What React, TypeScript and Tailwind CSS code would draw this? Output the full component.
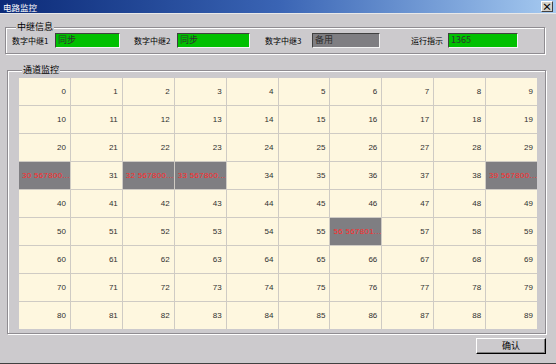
import React from "react";

const BG = "bg-[#cccacd]";

const alarms: Record<number, string> = {
  30: "30 567800...",
  32: "32 567800...",
  33: "33 567800...",
  39: "39 567800...",
  56: "56 567801...",
};

function StatusBox({ text, width, color }: { text: string; width: string; color: string }) {
  return (
    <div
      className={`${width} ${color} h-[15px] border border-t-[#404040] border-l-[#404040] border-b-[#f4f4f4] border-r-[#f4f4f4] pl-[2px] text-[9px] leading-[12px] text-[#303030]`}
    >
      {text}
    </div>
  );
}

function Cell({ n }: { n: number }) {
  const alarm = alarms[n];
  if (alarm) {
    return (
      <div className="bg-[#7f7e82] flex items-center pl-[3px] whitespace-nowrap overflow-hidden text-[8px] tracking-[0.3px] text-[#ff2a2a] font-['Liberation_Sans',sans-serif]">
        {alarm}
      </div>
    );
  }
  return (
    <div className="bg-[#fef7df] flex items-center justify-end pr-[4px] text-[8px] text-[#303030] font-['Liberation_Sans',sans-serif]">
      {n}
    </div>
  );
}

export default function App() {
  const cells = Array.from({ length: 90 }, (_, i) => i);
  return (
    <div
      className={`w-[556px] h-[364px] ${BG} flex flex-col border-b border-[#404040] overflow-hidden font-['Noto_Sans_CJK_SC','Liberation_Sans',sans-serif] text-[9px] text-black`}
    >
      {/* Title bar */}
      <div className="h-[14px] flex items-center justify-between bg-gradient-to-r from-[#0c2a78] via-[#3a64b4] to-[#a6caf0] pl-[3px] pr-[3px] border-b border-[#e8e8e8]">
        <span className="text-white text-[8.5px] leading-[12px]">电路监控</span>
        <div className="w-[12px] h-[11px] bg-[#d4d0c8] border border-t-white border-l-white border-b-[#404040] border-r-[#404040] flex items-center justify-center text-[10px] leading-none font-bold text-black">
          ×
        </div>
      </div>

      {/* 中继信息 */}
      <fieldset className="ml-[5px] mt-[7px] w-[540px] h-[33px] border border-[#8f8c91] shadow-[inset_1px_1px_0_#fff,1px_1px_0_#fff] px-[6px]">
        <legend className={`${BG} ml-[4px] px-[1px] text-[9px] leading-[12px]`}>中继信息</legend>
        <div className="flex items-center leading-[12px] text-[8px]">
          <span className="w-[43px]">数字中继1</span>
          <StatusBox text="同步" width="w-[65px]" color="bg-[#00c000]" />
          <span className="ml-[14px] w-[43px]">数字中继2</span>
          <StatusBox text="同步" width="w-[73px]" color="bg-[#00c000]" />
          <span className="ml-[15px] w-[47px]">数字中继3</span>
          <StatusBox text="备用" width="w-[68px]" color="bg-[#7f7e82]" />
          <span className="ml-[31px] w-[37px]">运行指示</span>
          <StatusBox text="1365" width="w-[70px]" color="bg-[#00c000]" />
        </div>
      </fieldset>

      {/* 通道监控 */}
      <fieldset className="ml-[7px] mt-[10px] w-[539px] h-[270px] border border-[#8f8c91] shadow-[inset_1px_1px_0_#fff,1px_1px_0_#fff] pl-[11px]">
        <legend className={`${BG} ml-[3px] px-[1px] text-[9px] leading-[12px]`}>通道监控</legend>
        <div className="mt-[2px] w-[518px] h-[251px] grid grid-cols-10 grid-rows-9 gap-px bg-[#cfcbc4]">
          {cells.map((n) => (
            <Cell key={n} n={n} />
          ))}
        </div>
      </fieldset>

      {/* Buttons */}
      <div className="flex justify-end pr-[10px] mt-[4px]">
        <button className="w-[70px] h-[16px] bg-[#cccacd] border border-t-white border-l-white border-b-black border-r-black shadow-[inset_-1px_-1px_0_#808080] text-[9px] leading-[12px]">
          确认
        </button>
      </div>
    </div>
  );
}
